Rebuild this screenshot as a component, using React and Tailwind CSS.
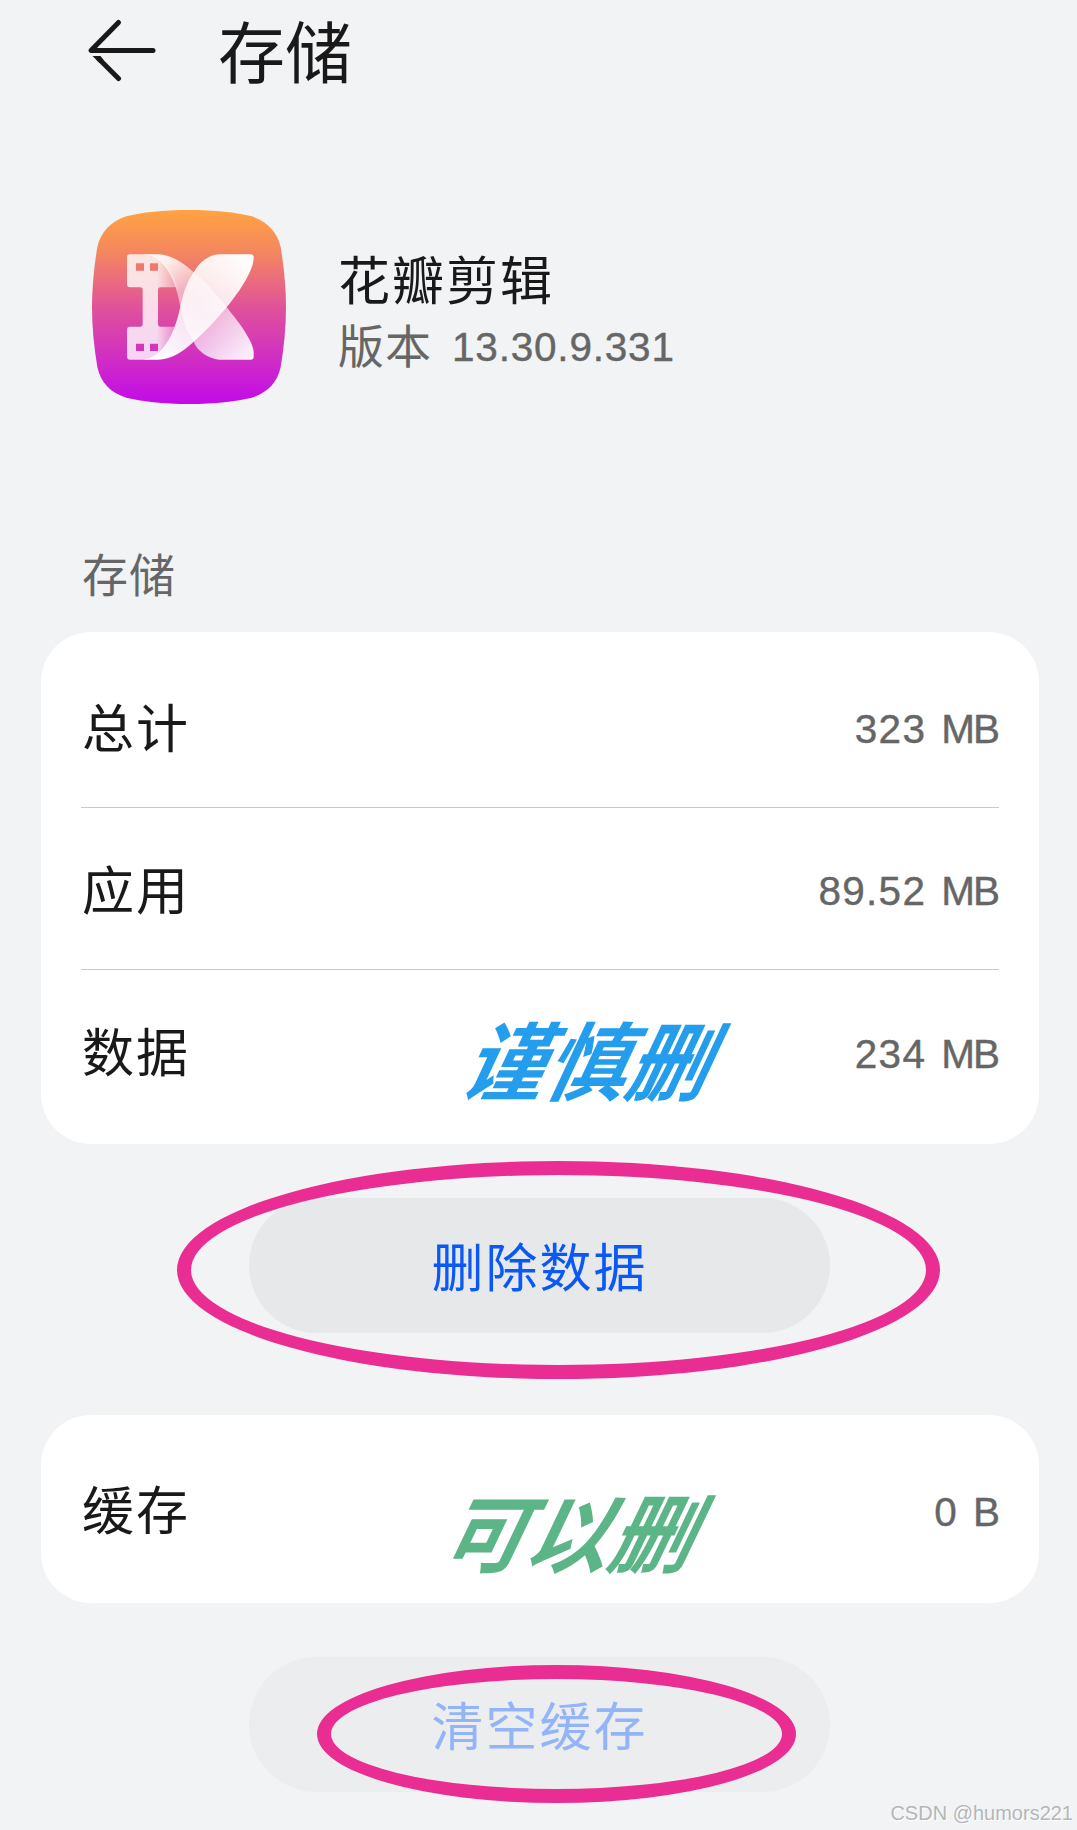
import React from 'react'

const storageRows = [
  { label: '总计', value: '323', unit: 'MB' },
  { label: '应用', value: '89.52', unit: 'MB' },
  { label: '数据', value: '234', unit: 'MB', note: '谨慎删' },
]

const BackIcon = () => (
  <svg width="70" height="64" viewBox="0 0 70 64" fill="none" stroke="#191919" strokeWidth="5">
    <path d="M31.5 4.5 L4 32.5 H66" strokeLinecap="round" strokeLinejoin="round" />
    <path d="M31.5 60.5 L12 41" strokeLinecap="round" />
    <path d="M5.5 38 h8 l3 4 -4 3z" fill="#191919" stroke="none" />
  </svg>
)

const AppIcon = () => (
  <svg width="194" height="194" viewBox="36 45 582 582">
    <defs>
      <linearGradient id="bg" x1="0" y1="0" x2="0" y2="1">
        <stop offset="0" stopColor="#ffa343" />
        <stop offset="0.22" stopColor="#f4865f" />
        <stop offset="0.5" stopColor="#e0529a" />
        <stop offset="0.78" stopColor="#cf2cc6" />
        <stop offset="1" stopColor="#c20ae8" />
      </linearGradient>
      <linearGradient id="back" x1="200" y1="180" x2="510" y2="494" gradientUnits="userSpaceOnUse">
        <stop offset="0" stopColor="#fff" stopOpacity="1" />
        <stop offset="0.14" stopColor="#fff" stopOpacity="0.85" />
        <stop offset="0.34" stopColor="#fff" stopOpacity="0.5" />
        <stop offset="0.62" stopColor="#fff" stopOpacity="0.6" />
        <stop offset="1" stopColor="#fff" stopOpacity="0.95" />
      </linearGradient>
      <linearGradient id="front" x1="510" y1="185" x2="220" y2="494" gradientUnits="userSpaceOnUse">
        <stop offset="0" stopColor="#fff" stopOpacity="1" />
        <stop offset="0.5" stopColor="#fff" stopOpacity="0.8" />
        <stop offset="1" stopColor="#fff" stopOpacity="1" />
      </linearGradient>
      <linearGradient id="film" x1="230" y1="0" x2="315" y2="0" gradientUnits="userSpaceOnUse">
        <stop offset="0" stopColor="#fff" stopOpacity="0.8" />
        <stop offset="1" stopColor="#fff" stopOpacity="0.15" />
      </linearGradient>
    </defs>
    <path
      d="M327 45C405 45 470 52 515 64C563 80 592 112 602 156C612 215 618 280 618 336C618 395 612 457 602 516C592 563 563 593 515 608C470 619 405 627 327 627C249 627 184 619 139 608C91 593 62 563 52 516C42 457 36 395 36 336C36 280 42 215 52 156C62 112 91 80 139 64C184 52 249 45 327 45Z"
      fill="url(#bg)"
    />
    {/* film strip */}
    <path
      fillRule="evenodd"
      d="M150 178H210C252 195 278 230 291 277H241Q234 277 234 284V388Q234 395 241 395H285C265 450 240 485 200 494H150Q141 494 141 485V404Q141 395 150 395H180Q188 395 188 388V284Q188 277 180 277H150Q141 277 141 268V187Q141 178 150 178ZM168 205V227H192V205ZM210 205V227H234V205ZM168 446V468H192V446ZM210 446V468H234V446Z"
      fill="url(#film)"
    />
    <path
      d="M190 178H235C275 180 310 203 341 232C385 271 412 301 440 337C482 388 519 440 521 470V485Q521 494 512 494H418C382 490 350 465 341 440C320 410 306 370 300 330C288 265 262 184 190 178Z"
      fill="url(#back)"
    />
    <path
      d="M418 178H512Q521 178 521 187C522 222 484 284 440 337C410 373 374 412 341 440C305 474 272 492 235 494H190C252 487 286 410 302 330C313 284 324 255 341 232C359 200 386 180 418 178Z"
      fill="url(#front)"
    />
  </svg>
)

const Row = ({ label, value, unit, children }) => (
  <div className="relative flex h-[162px] items-center justify-between">
    <span className="-mt-[2px] pl-px text-[52px] leading-none tracking-[2px]">{label}</span>
    <span className="mt-[6px] flex gap-[15px] font-['Liberation_Sans'] text-[40.5px] leading-none text-[#666] [-webkit-text-stroke:0.4px_#666]">
      <span className="tracking-[1.3px]">{value}</span>
      <span className="mr-px tracking-[-2px]">{unit}</span>
    </span>
    {children}
  </div>
)

const App = () => {
  return (
    <div className="h-[1830px] w-[1077px] overflow-hidden bg-[#f1f3f5] px-[41px] font-['Noto_Sans_CJK_SC',sans-serif] text-[#191919]">
      {/* Header */}
      <header className="flex h-[105px] items-center pl-[46px]">
        <div className="-mt-[6px]">
          <BackIcon />
        </div>
        <h1 className="-mt-[8px] ml-[61px] text-[67px] leading-none">存储</h1>
      </header>

      {/* App info */}
      <section className="mt-[105px] flex h-[194px] items-center pl-[51px]">
        <AppIcon />
        <div className="ml-[52px] pt-[10px]">
          <p className="text-[52px] leading-[66px] tracking-[2px]">花瓣剪辑</p>
          <p className="flex h-[68px] items-center gap-[20px] text-[46px] leading-[64px] text-[#666]">
            <span className="-mt-[4px] tracking-[1px]">版本</span>
            <span className="pt-[3px] font-['Liberation_Sans'] text-[40.5px] tracking-[0.8px] [-webkit-text-stroke:0.4px_#666]">
              13.30.9.331
            </span>
          </p>
        </div>
      </section>

      <h2 className="mt-[138px] h-[90px] pl-[41px] text-[46px] leading-[60px] tracking-[1px] text-[#666]">存储</h2>

      {/* Storage */}
      <div className="h-[512px] w-[998px] divide-y divide-[#c8c8c9] rounded-[50px] bg-white pt-[14px] pr-[40px] pl-[40px]">
        {storageRows.map((row) => (
          <Row key={row.label} {...row}>
            {row.note && (
              <span className="absolute top-[44px] left-[390px] -skew-x-[26deg] scale-x-[0.96] text-[85px] leading-none font-bold whitespace-nowrap text-[#259ded]">
                {row.note}
              </span>
            )}
          </Row>
        ))}
      </div>

      <div className="relative mt-[54px] ml-[208px] h-[135px] w-[581px]">
        <button className="h-full w-full rounded-full bg-[#e6e8ea] pb-px text-[52px] leading-none tracking-[2px] text-[#0a59f7]">
          删除数据
        </button>
        <div className="absolute -top-[37px] -left-[72px] h-[218px] w-[763px] rounded-[50%] border-[14px] border-[#ea2d92]" />
      </div>

      {/* Cache */}
      <div className="mt-[82px] h-[188px] w-[998px] rounded-[50px] bg-white py-[13px] pr-[40px] pl-[40px]">
        <Row label="缓存" value="0" unit="B">
          <span className="absolute top-[58px] left-[372px] -skew-x-[26deg] scale-x-[0.98] text-[85px] leading-none font-bold whitespace-nowrap text-[#5bb587]">
            可以删
          </span>
        </Row>
      </div>

      <div className="relative mt-[54px] ml-[208px] h-[135px] w-[581px]">
        <button className="h-full w-full rounded-full bg-[#ecedef] pb-px text-[52px] leading-none tracking-[2px] text-[#94b4f8]" disabled>
          清空缓存
        </button>
        <div className="absolute top-[8px] left-[68px] h-[138px] w-[479px] rounded-[50%] border-[14px] border-[#ea2d92]" />
      </div>

      <p className="mt-[8px] -mr-[37px] text-right font-['Liberation_Sans'] text-[20px] leading-[26px] text-[#b4b6b8] [text-shadow:1px_1px_0_#fff]">
        CSDN @humors221
      </p>
    </div>
  )
}

export default App
